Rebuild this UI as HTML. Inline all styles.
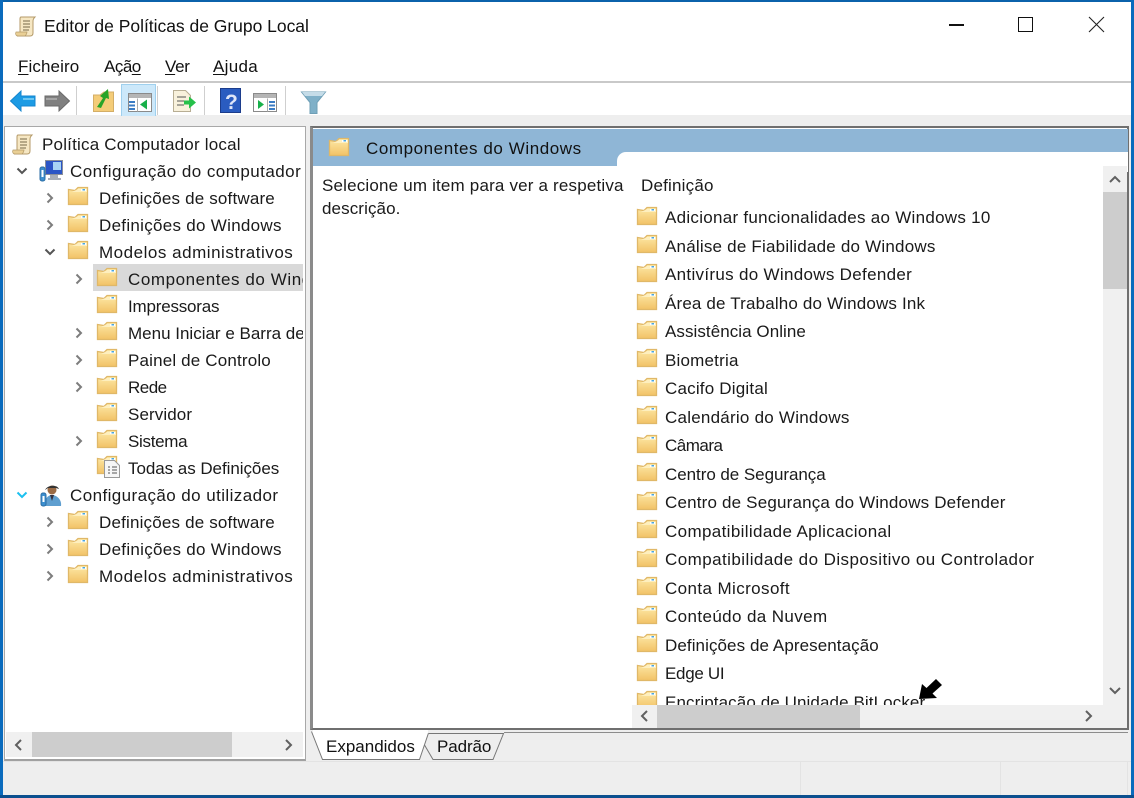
<!DOCTYPE html>
<html><head><meta charset="utf-8"><style>
html,body{margin:0;padding:0;width:1134px;height:798px;overflow:hidden;background:#eee}
*{box-sizing:border-box}
#w{position:relative;width:1134px;height:798px;overflow:hidden;font-family:"Liberation Sans",sans-serif;font-size:17px;color:#1a1a1a;background:#eeeeee}
.a{position:absolute}
.t{position:absolute;white-space:nowrap;line-height:20px;height:20px}
.f{position:absolute;width:22px;height:20px}
.c{position:absolute;width:10px;height:12px}
u{text-decoration-thickness:1px;text-underline-offset:2px}
</style></head><body><div id="w">
<svg width="0" height="0" style="position:absolute"><defs>
<linearGradient id="g" x1="0" y1="0" x2="0" y2="1"><stop offset="0" stop-color="#fde9a8"/><stop offset="1" stop-color="#f2c266"/></linearGradient>
<symbol id="fo" viewBox="0 0 22 20"><path d="M1.500 3.500 L1.500 18.500 L20.500 18.500 L20.500 1.500 L11 1.500 L8 4.500 Z" fill="url(#g)" stroke="#e0b868" stroke-width="1.300"/><path d="M11 3h9v3H5z" fill="#fff3c8" opacity=".8"/><path d="M14 3h5v2h-5z" fill="#fff"/><path d="M15.500 3h2.500v1.500h-2.500z" fill="#4aa6e0"/></symbol>
<symbol id="ar" viewBox="0 0 10 12"><path d="M2.500 1.500 L7 6 L2.500 10.500" fill="none" stroke="#7d7d7d" stroke-width="2"/></symbol>
<symbol id="dn" viewBox="0 0 12 10"><path d="M1.500 2.500 L6 7 L10.500 2.500" fill="none" stroke="#555" stroke-width="2"/></symbol>
<symbol id="sc" viewBox="0 0 24 24"><path d="M7 3h14c-2 2-2 3-2 5v11c0 2-1 3-3 3H3c2-1 3-2 3-4V5c0-1 0-2 1-2z" fill="#f6e7c3" stroke="#b49a68"/><path d="M2 18h11c0 2-1 3-2 4H4c-2 0-3-2-2-4z" fill="#e9cf95" stroke="#b49a68" stroke-width=".7"/><path d="M9 7h7M9 10h7M9 13h7M9 16h6" stroke="#77684a" stroke-width="1"/></symbol>
</defs></svg>

<!-- window border -->
<div class="a" style="left:0;top:0;width:1134px;height:2px;background:#0b62ab"></div>
<div class="a" style="left:0;top:0;width:3px;height:798px;background:#0a6bbd"></div>
<div class="a" style="left:1131px;top:0;width:3px;height:798px;background:#0a6bbd"></div>
<div class="a" style="left:0;top:795px;width:1134px;height:3px;background:#0b4f8e"></div>

<!-- title and menu -->
<div class="a" style="left:3px;top:2px;width:1128px;height:113px;background:#fff"></div>
<svg class="a" style="left:14px;top:14px" width="24" height="24"><use href="#sc"/></svg>
<div class="t" style="left:44px;top:16px;font-size:17.5px;letter-spacing:-.02px;color:#111">Editor de Políticas de Grupo Local</div>
<div class="a" style="left:949px;top:24px;width:15px;height:2px;background:#111"></div>
<div class="a" style="left:1018px;top:17px;width:15px;height:15px;border:1.500px solid #111"></div>
<svg class="a" style="left:1088px;top:16px" width="17" height="17"><path d="M1 1L16 16M16 1L1 16" stroke="#222" stroke-width="1.100"/></svg>
<div class="t" style="left:18px;top:57px;color:#111;letter-spacing:.1px"><u>F</u>icheiro</div>
<div class="t" style="left:104px;top:57px;color:#111;letter-spacing:-.5px">Açã<u>o</u></div>
<div class="t" style="left:165px;top:57px;color:#111;letter-spacing:-.3px"><u>V</u>er</div>
<div class="t" style="left:213px;top:57px;color:#111;letter-spacing:.3px"><u>A</u>juda</div>
<div class="a" style="left:3px;top:81px;width:1128px;height:2px;background:#c9c9c9"></div>

<!-- toolbar -->
<svg class="a" style="left:0;top:84px" width="340" height="32">
<path d="M10.500 17 L21 7 V12 H35 V22 H21 V27 Z" fill="#1c9be4" stroke="#1486cf"/>
<path d="M23 14h11v2H23z" fill="#6cc6f2"/>
<path d="M69.500 17 L59 7 V12 H45 V22 H59 V27 Z" fill="#808080" stroke="#6a6a6a"/>
<path d="M46 14h11v2H46z" fill="#a5a5a5"/>
<path d="M76.500 2v29" stroke="#cfcfcf"/>
<path d="M93.500 11 L100 11 L104 8 H113.500 V27.500 H93.500 Z" fill="#f4cc78" stroke="#d4ae66"/>
<path d="M97 23 L103 14 L100 12 L108 5 L109 15 L106 14 L101 24 Z" fill="#28a428"/>
<rect x="121.500" y="0.500" width="34" height="32" fill="#cce8fa" stroke="#9fd0ee"/>
<rect x="128.500" y="9.500" width="23" height="18" fill="#fff" stroke="#8a8a8a"/>
<rect x="129" y="10" width="22" height="4" fill="#b5b5b5"/>
<path d="M129 17h6v2h-6zM129 20.500h6v2h-6zM129 24h6v2h-6z" fill="#3b7cc4"/>
<path d="M137.500 14.500v13" stroke="#aaa"/>
<path d="M140 20.500 L147 15.500 V25.500 Z" fill="#18b04a"/>
<path d="M157.500 2v29" stroke="#cfcfcf"/>
<path d="M173.500 6.500h12l5 5v16h-17z" fill="#f8f1dc" stroke="#b8ae94"/>
<path d="M177 13h9M177 17h7M177 21h7" stroke="#555"/>
<path d="M184 16.500h5v-4l7 6-7 6v-4h-5z" fill="#26c04a"/>
<path d="M204.500 2v29" stroke="#cfcfcf"/>
<rect x="220.500" y="4.500" width="20" height="24" fill="#2a5cc0" stroke="#1c3d8c"/>
<text x="225" y="25" font-family="Liberation Sans" font-weight="bold" font-size="21" fill="#dfe6f8">?</text>
<rect x="253.500" y="9.500" width="23" height="18" fill="#fff" stroke="#8a8a8a"/>
<rect x="254" y="10" width="22" height="4" fill="#b5b5b5"/>
<path d="M269 17h6v2h-6zM269 20.500h6v2h-6zM269 24h6v2h-6z" fill="#3b7cc4"/>
<path d="M267.500 14.500v13" stroke="#aaa"/>
<path d="M264 20.500 L258 16 V25 Z" fill="#18b04a"/>
<path d="M285.500 2v29" stroke="#cfcfcf"/>
<path d="M301.500 8h24l-8.500 10.500V29.500h-7V18.500z" fill="#7fb0c8" stroke="#6f9fb6"/>
<path d="M302 8h23l-3 4h-17z" fill="#c5dce8"/>
</svg>

<!-- left pane -->
<div class="a" style="left:4px;top:126px;width:302px;height:635px;background:#fff;border:1px solid #a8a8a8;border-bottom:2px solid #a0a0a0"></div>
<svg class="a" style="left:11px;top:132px" width="24" height="24"><use href="#sc"/></svg>
<div class="t" style="left:42px;top:135px;letter-spacing:.2px">Política Computador local</div>
<svg class="a" style="left:16px;top:166px" width="12" height="10"><use href="#dn"/></svg>
<svg class="a" style="left:39px;top:159px" width="24" height="24"><rect x="6.500" y="1.500" width="17" height="14" fill="#2b55c6" stroke="#8a8f9a"/><rect x="14" y="3" width="8" height="8" fill="#a8d4f5"/><path d="M11 16h8v3h3v2H9v-2h2z" fill="#a9aeb8"/><rect x="1" y="8" width="5" height="14" rx="2" fill="#3c8fcf" stroke="#2c6ea5"/><rect x="2.500" y="11" width="2" height="7" fill="#fff"/></svg>
<div class="t" style="left:70px;top:162px;letter-spacing:.46px">Configuração do computador</div>

<svg class="c" style="left:45px;top:192px"><use href="#ar"/></svg>
<svg class="f" style="left:67px;top:186px"><use href="#fo"/></svg>
<div class="t" style="left:99px;top:189px;letter-spacing:.18px">Definições de software</div>
<svg class="c" style="left:45px;top:219px"><use href="#ar"/></svg>
<svg class="f" style="left:67px;top:213px"><use href="#fo"/></svg>
<div class="t" style="left:99px;top:216px;letter-spacing:.29px">Definições do Windows</div>
<svg class="a" style="left:44px;top:247px" width="12" height="10"><use href="#dn"/></svg>
<svg class="f" style="left:67px;top:240px"><use href="#fo"/></svg>
<div class="t" style="left:99px;top:243px;letter-spacing:.52px">Modelos administrativos</div>

<div class="a" style="left:93px;top:264px;width:210px;height:27px;background:#d9d9d9"></div>
<svg class="c" style="left:74px;top:273px"><use href="#ar"/></svg>
<svg class="f" style="left:96px;top:267px"><use href="#fo"/></svg>
<div class="t" style="left:128px;top:270px;width:175px;overflow:hidden;letter-spacing:.57px">Componentes do Windows</div>
<svg class="f" style="left:96px;top:294px"><use href="#fo"/></svg>
<div class="t" style="left:128px;top:297px;letter-spacing:-.2px">Impressoras</div>
<svg class="c" style="left:74px;top:327px"><use href="#ar"/></svg>
<svg class="f" style="left:96px;top:321px"><use href="#fo"/></svg>
<div class="t" style="left:128px;top:324px;width:175px;overflow:hidden">Menu Iniciar e Barra de Tarefas</div>
<svg class="c" style="left:74px;top:354px"><use href="#ar"/></svg>
<svg class="f" style="left:96px;top:348px"><use href="#fo"/></svg>
<div class="t" style="left:128px;top:351px;letter-spacing:.17px">Painel de Controlo</div>
<svg class="c" style="left:74px;top:381px"><use href="#ar"/></svg>
<svg class="f" style="left:96px;top:375px"><use href="#fo"/></svg>
<div class="t" style="left:128px;top:378px;letter-spacing:-.5px">Rede</div>
<svg class="f" style="left:96px;top:402px"><use href="#fo"/></svg>
<div class="t" style="left:128px;top:405px;letter-spacing:.1px">Servidor</div>
<svg class="c" style="left:74px;top:435px"><use href="#ar"/></svg>
<svg class="f" style="left:96px;top:429px"><use href="#fo"/></svg>
<div class="t" style="left:128px;top:432px;letter-spacing:-.3px">Sistema</div>
<svg class="f" style="left:96px;top:455px"><use href="#fo"/></svg>
<svg class="a" style="left:104px;top:460px" width="16" height="18"><path d="M.5.500h10l5 5v12H.5z" fill="#f6f6f6" stroke="#999"/><path d="M4 7h2M8 7h5M4 10h2M8 10h5M4 13h2M8 13h5" stroke="#555"/></svg>
<div class="t" style="left:128px;top:459px;letter-spacing:-.05px">Todas as Definições</div>

<svg class="a" style="left:16px;top:490px" width="12" height="10"><path d="M1.500 2.500 L6 7 L10.500 2.500" fill="none" stroke="#1cc0f0" stroke-width="2"/></svg>
<svg class="a" style="left:39px;top:483px" width="24" height="24"><circle cx="13" cy="7" r="4.500" fill="#9a6a44"/><path d="M6 7c2-5 12-6 14-1l-3-1H9z" fill="#333"/><path d="M6 23c-1-7 3-11 7-11s10 4 9 11z" fill="#5f9fd0"/><path d="M11 12h4l-2 6z" fill="#334"/><rect x="2" y="10" width="5" height="13" rx="2" fill="#3c8fcf" stroke="#2c6ea5"/><rect x="3.500" y="13" width="2" height="6" fill="#fff"/></svg>
<div class="t" style="left:70px;top:486px;letter-spacing:.42px">Configuração do utilizador</div>
<svg class="c" style="left:45px;top:516px"><use href="#ar"/></svg>
<svg class="f" style="left:67px;top:510px"><use href="#fo"/></svg>
<div class="t" style="left:99px;top:513px;letter-spacing:.18px">Definições de software</div>
<svg class="c" style="left:45px;top:543px"><use href="#ar"/></svg>
<svg class="f" style="left:67px;top:537px"><use href="#fo"/></svg>
<div class="t" style="left:99px;top:540px;letter-spacing:.29px">Definições do Windows</div>
<svg class="c" style="left:45px;top:570px"><use href="#ar"/></svg>
<svg class="f" style="left:67px;top:564px"><use href="#fo"/></svg>
<div class="t" style="left:99px;top:567px;letter-spacing:.52px">Modelos administrativos</div>

<!-- left scrollbar -->
<div class="a" style="left:6px;top:732px;width:297px;height:25px;background:#f0f0f0"></div>
<div class="a" style="left:32px;top:732px;width:200px;height:25px;background:#cdcdcd"></div>
<svg class="a" style="left:12px;top:738px" width="12" height="14"><path d="M9 2 L4 7 L9 12" fill="none" stroke="#606060" stroke-width="2"/></svg>
<svg class="a" style="left:283px;top:738px" width="12" height="14"><path d="M3 2 L8 7 L3 12" fill="none" stroke="#606060" stroke-width="2"/></svg>

<!-- right pane -->
<div class="a" style="left:310px;top:126px;width:819px;height:604px;background:#fff;border:2px solid #6f6f6f;border-left-width:3px;border-left-color:#8a8a8a"></div>
<div class="a" style="left:313px;top:129px;width:815px;height:37px;background:#8fb6d6"></div>
<div class="a" style="left:617px;top:152px;width:511px;height:20px;background:#fff;border-top-left-radius:9px"></div>
<svg class="f" style="left:328px;top:137px"><use href="#fo"/></svg>
<div class="t" style="left:366px;top:139px;color:#111;letter-spacing:.57px">Componentes do Windows</div>
<div class="t" style="left:322px;top:176px;letter-spacing:.18px">Selecione um item para ver a respetiva</div>
<div class="t" style="left:322px;top:199px;letter-spacing:.1px">descrição.</div>
<div class="t" style="left:641px;top:176px;letter-spacing:.2px">Definição</div>

<div class="a" id="l" style="left:632px;top:200px;width:471px;height:505px;overflow:hidden;background:#fff">
<svg class="f" style="left:4px;top:6px"><use href="#fo"/></svg><div class="t" style="left:33px;top:8px;letter-spacing:.28px">Adicionar funcionalidades ao Windows 10</div>
<svg class="f" style="left:4px;top:34px"><use href="#fo"/></svg><div class="t" style="left:33px;top:37px;letter-spacing:.21px">Análise de Fiabilidade do Windows</div>
<svg class="f" style="left:4px;top:63px"><use href="#fo"/></svg><div class="t" style="left:33px;top:65px;letter-spacing:.31px">Antivírus do Windows Defender</div>
<svg class="f" style="left:4px;top:91px"><use href="#fo"/></svg><div class="t" style="left:33px;top:94px;letter-spacing:.16px">Área de Trabalho do Windows Ink</div>
<svg class="f" style="left:4px;top:120px"><use href="#fo"/></svg><div class="t" style="left:33px;top:122px;letter-spacing:.06px">Assistência Online</div>
<svg class="f" style="left:4px;top:148px"><use href="#fo"/></svg><div class="t" style="left:33px;top:151px;letter-spacing:.2px">Biometria</div>
<svg class="f" style="left:4px;top:177px"><use href="#fo"/></svg><div class="t" style="left:33px;top:179px;letter-spacing:.2px">Cacifo Digital</div>
<svg class="f" style="left:4px;top:205px"><use href="#fo"/></svg><div class="t" style="left:33px;top:208px;letter-spacing:.24px">Calendário do Windows</div>
<svg class="f" style="left:4px;top:234px"><use href="#fo"/></svg><div class="t" style="left:33px;top:236px;letter-spacing:-.5px">Câmara</div>
<svg class="f" style="left:4px;top:262px"><use href="#fo"/></svg><div class="t" style="left:33px;top:265px;letter-spacing:-.05px">Centro de Segurança</div>
<svg class="f" style="left:4px;top:291px"><use href="#fo"/></svg><div class="t" style="left:33px;top:293px;letter-spacing:.18px">Centro de Segurança do Windows Defender</div>
<svg class="f" style="left:4px;top:319px"><use href="#fo"/></svg><div class="t" style="left:33px;top:322px;letter-spacing:.36px">Compatibilidade Aplicacional</div>
<svg class="f" style="left:4px;top:348px"><use href="#fo"/></svg><div class="t" style="left:33px;top:350px;letter-spacing:.44px">Compatibilidade do Dispositivo ou Controlador</div>
<svg class="f" style="left:4px;top:376px"><use href="#fo"/></svg><div class="t" style="left:33px;top:379px;letter-spacing:.4px">Conta Microsoft</div>
<svg class="f" style="left:4px;top:405px"><use href="#fo"/></svg><div class="t" style="left:33px;top:407px;letter-spacing:.39px">Conteúdo da Nuvem</div>
<svg class="f" style="left:4px;top:433px"><use href="#fo"/></svg><div class="t" style="left:33px;top:436px;letter-spacing:.08px">Definições de Apresentação</div>
<svg class="f" style="left:4px;top:462px"><use href="#fo"/></svg><div class="t" style="left:33px;top:464px;letter-spacing:-.3px">Edge UI</div>
<svg class="f" style="left:4px;top:490px"><use href="#fo"/></svg><div class="t" style="left:33px;top:493px;letter-spacing:.1px">Encriptação de Unidade BitLocker</div>
</div>

<!-- right scrollbars -->
<div class="a" style="left:1103px;top:166px;width:24px;height:539px;background:#f0f0f0"></div>
<div class="a" style="left:1103px;top:192px;width:24px;height:97px;background:#cdcdcd"></div>
<svg class="a" style="left:1108px;top:174px" width="14" height="10"><path d="M2 8 L7 3 L12 8" fill="none" stroke="#606060" stroke-width="2"/></svg>
<svg class="a" style="left:1108px;top:686px" width="14" height="10"><path d="M2 2 L7 7 L12 2" fill="none" stroke="#606060" stroke-width="2"/></svg>
<div class="a" style="left:632px;top:705px;width:495px;height:23px;background:#f0f0f0"></div>
<div class="a" style="left:657px;top:705px;width:203px;height:23px;background:#cdcdcd"></div>
<svg class="a" style="left:638px;top:709px" width="12" height="14"><path d="M9 2 L4 7 L9 12" fill="none" stroke="#606060" stroke-width="2"/></svg>
<svg class="a" style="left:1083px;top:709px" width="12" height="14"><path d="M3 2 L8 7 L3 12" fill="none" stroke="#606060" stroke-width="2"/></svg>

<!-- cursor -->
<svg class="a" style="left:917px;top:677px" width="26" height="24"><path d="M2 22 L5 7 L9.500 11 L19 2 L25 8 L15.500 16.500 L20 21 Z" fill="#000"/></svg>

<!-- tabs -->
<div class="a" style="left:504px;top:732px;width:624px;height:1px;background:#8c8c8c"></div>
<svg class="a" style="left:308px;top:730px" width="205" height="32">
<path d="M121 3.500 L195.500 3.500 L185 29.500 L125 29.500 L116.500 15" fill="#eee" stroke="#777"/>
<path d="M3.500 1.500 L14.500 29.500 L111.500 29.500 L120.500 3" fill="#fff" stroke="#777"/>
<path d="M5 1.500 L120 1.500" stroke="#fff" stroke-width="3"/>
</svg>
<div class="t" style="left:326px;top:737px;color:#111">Expandidos</div>
<div class="t" style="left:437px;top:737px;color:#111;letter-spacing:-.1px">Padrão</div>

<!-- status bar -->
<div class="a" style="left:3px;top:761px;width:1128px;height:1px;background:#e3e3e3"></div>
<div class="a" style="left:800px;top:762px;width:1px;height:33px;background:#e3e3e3"></div>
<div class="a" style="left:1000px;top:762px;width:1px;height:33px;background:#e3e3e3"></div>
<div class="a" style="left:1127px;top:762px;width:1px;height:33px;background:#e3e3e3"></div>
</div></body></html>
